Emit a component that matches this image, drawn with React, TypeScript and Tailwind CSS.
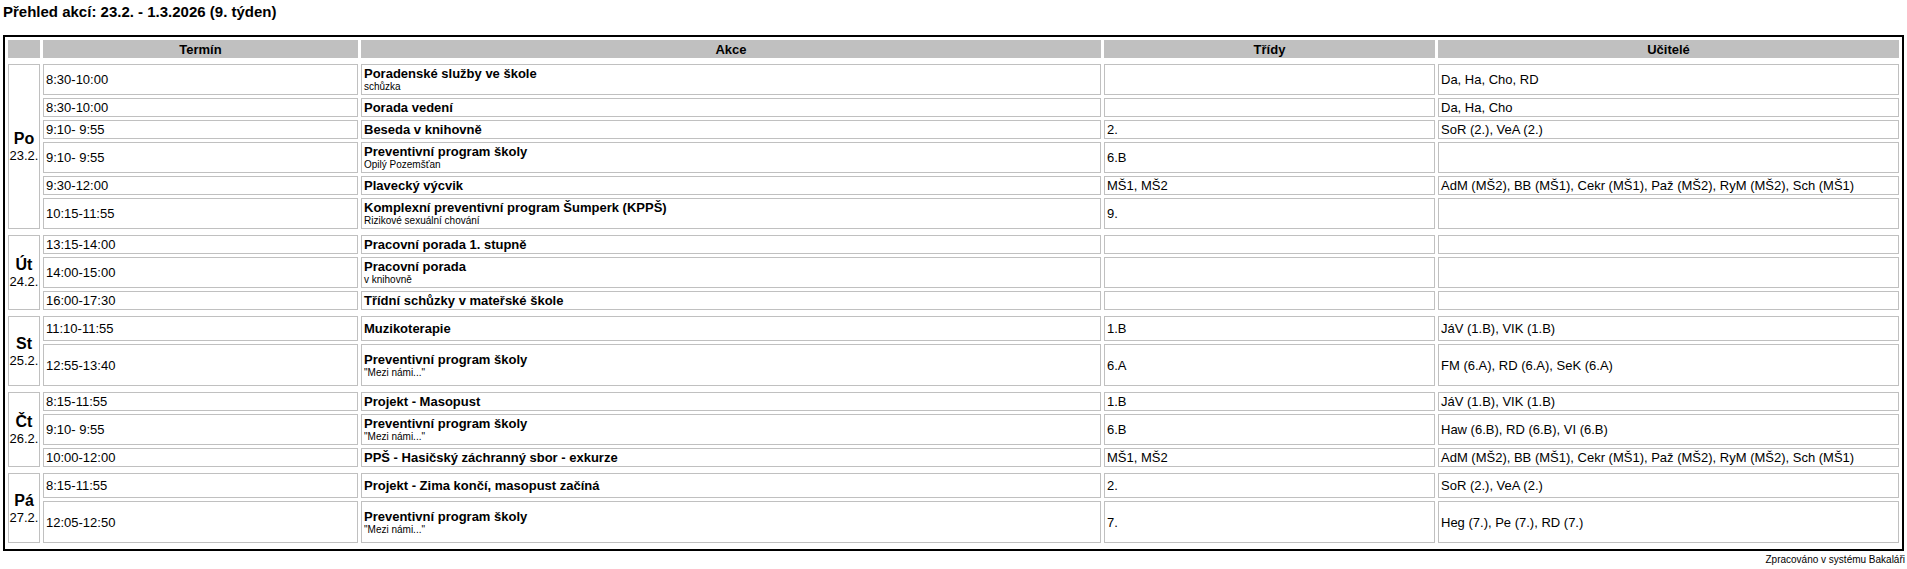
import React from 'react';

type Akce = {
  cas: string;
  nazev: string;
  pozn?: string;
  tridy: string;
  ucitele: string;
};

type Den = {
  den: string;
  datum: string;
  akce: Akce[];
};

const MS = 'AdM (MŠ2), BB (MŠ1), Cekr (MŠ1), Paž (MŠ2), RyM (MŠ2), Sch (MŠ1)';

const tyden: Den[] = [
  {
    den: 'Po',
    datum: '23.2.',
    akce: [
      { cas: '8:30-10:00', nazev: 'Poradenské služby ve škole', pozn: 'schůzka', tridy: '', ucitele: 'Da, Ha, Cho, RD' },
      { cas: '8:30-10:00', nazev: 'Porada vedení', tridy: '', ucitele: 'Da, Ha, Cho' },
      { cas: '9:10- 9:55', nazev: 'Beseda v knihovně', tridy: '2.', ucitele: 'SoR (2.), VeA (2.)' },
      { cas: '9:10- 9:55', nazev: 'Preventivní program školy', pozn: 'Opilý Pozemšťan', tridy: '6.B', ucitele: '' },
      { cas: '9:30-12:00', nazev: 'Plavecký výcvik', tridy: 'MŠ1, MŠ2', ucitele: MS },
      { cas: '10:15-11:55', nazev: 'Komplexní preventivní program Šumperk (KPPŠ)', pozn: 'Rizikové sexuální chování', tridy: '9.', ucitele: '' },
    ],
  },
  {
    den: 'Út',
    datum: '24.2.',
    akce: [
      { cas: '13:15-14:00', nazev: 'Pracovní porada 1. stupně', tridy: '', ucitele: '' },
      { cas: '14:00-15:00', nazev: 'Pracovní porada', pozn: 'v knihovně', tridy: '', ucitele: '' },
      { cas: '16:00-17:30', nazev: 'Třídní schůzky v mateřské škole', tridy: '', ucitele: '' },
    ],
  },
  {
    den: 'St',
    datum: '25.2.',
    akce: [
      { cas: '11:10-11:55', nazev: 'Muzikoterapie', tridy: '1.B', ucitele: 'JáV (1.B), VIK (1.B)' },
      { cas: '12:55-13:40', nazev: 'Preventivní program školy', pozn: '"Mezi námi..."', tridy: '6.A', ucitele: 'FM (6.A), RD (6.A), SeK (6.A)' },
    ],
  },
  {
    den: 'Čt',
    datum: '26.2.',
    akce: [
      { cas: '8:15-11:55', nazev: 'Projekt - Masopust', tridy: '1.B', ucitele: 'JáV (1.B), VIK (1.B)' },
      { cas: '9:10- 9:55', nazev: 'Preventivní program školy', pozn: '"Mezi námi..."', tridy: '6.B', ucitele: 'Haw (6.B), RD (6.B), VI (6.B)' },
      { cas: '10:00-12:00', nazev: 'PPŠ - Hasičský záchranný sbor - exkurze', tridy: 'MŠ1, MŠ2', ucitele: MS },
    ],
  },
  {
    den: 'Pá',
    datum: '27.2.',
    akce: [
      { cas: '8:15-11:55', nazev: 'Projekt - Zima končí, masopust začíná', tridy: '2.', ucitele: 'SoR (2.), VeA (2.)' },
      { cas: '12:05-12:50', nazev: 'Preventivní program školy', pozn: '"Mezi námi..."', tridy: '7.', ucitele: 'Heg (7.), Pe (7.), RD (7.)' },
    ],
  },
];

const td = 'border border-[#c0c0c0] px-[2px] py-px align-middle text-left';
const th = 'bg-[#c0c0c0] h-[18px] p-0 text-center font-bold';

export default function App() {
  return (
    <div className="min-h-screen bg-white text-black font-['Liberation_Sans',Arial,sans-serif] text-[13px] leading-[15px]">
      <h1 className="px-[3px] pt-[3px] text-[15px] leading-[17px] font-bold">Přehled akcí: 23.2. - 1.3.2026 (9. týden)</h1>

      <div className="px-[3px] pt-[15px]">
        <table className="w-full table-fixed border-separate border-spacing-[3px] border-2 border-black">
          <colgroup>
            <col className="w-[32px]" />
            <col className="w-[315px]" />
            <col className="w-[740px]" />
            <col className="w-[331px]" />
            <col />
          </colgroup>
          <thead>
            <tr>
              <th className={th}></th>
              <th className={th}>Termín</th>
              <th className={th}>Akce</th>
              <th className={th}>Třídy</th>
              <th className={th}>Učitelé</th>
            </tr>
          </thead>
          {tyden.map((d) => (
            <tbody key={d.den}>
              <tr>
                <td colSpan={5} className="p-0 h-0"></td>
              </tr>
              {d.akce.map((a, i) => (
                <tr key={i}>
                  {i === 0 && (
                    <td rowSpan={d.akce.length} className="h-[70px] border border-[#c0c0c0] p-0 text-center align-middle">
                      <div className="text-[16px] leading-[18px] font-bold">{d.den}</div>
                      <div>{d.datum}</div>
                    </td>
                  )}
                  <td className={td}>{a.cas}</td>
                  <td className={td}>
                    <div className="font-bold">{a.nazev}</div>
                    {a.pozn && <div className="text-[10px] leading-[12px]">{a.pozn}</div>}
                  </td>
                  <td className={td}>{a.tridy}</td>
                  <td className={td}>{a.ucitele}</td>
                </tr>
              ))}
            </tbody>
          ))}
          <tbody>
            <tr>
              <td colSpan={5} className="p-0 h-0"></td>
            </tr>
          </tbody>
        </table>
      </div>

      <div className="px-[2px] pt-[3px] text-right text-[10px] leading-[12px]">Zpracováno v systému Bakaláři</div>
    </div>
  );
}
